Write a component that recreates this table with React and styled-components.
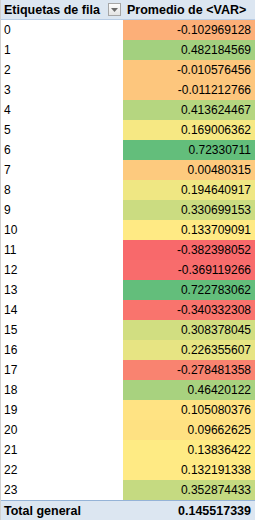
import React from 'react';
import styled, { createGlobalStyle } from 'styled-components';

const GlobalStyle = createGlobalStyle`
  body {
    margin: 0;
    background: #fff;
    font-family: "Liberation Sans", Arial, sans-serif;
  }
`

const Table = styled.div`
  width: 255px;
  border-left: 1px solid #d0d0d0;
  box-sizing: border-box;
  font-size: 12px;
  color: #000;
`

const Row = styled.div`
  display: grid;
  grid-template-columns: 122px 1fr;
  height: 20px;
  align-items: center;
`

const HeaderRow = styled(Row)`
  background: #dce6f1;
  height: 19px;
  border-bottom: 1px solid #b8cce4;
  font-weight: 700;
  font-size: 12.5px;
`

const TotalRow = styled(Row)`
  background: #dce6f1;
  height: 19px;
  border-top: 1px solid #95b3d7;
  font-weight: 700;
  font-size: 12.5px;
`

const LabelCell = styled.div`
  display: flex;
  align-items: center;
  justify-content: space-between;
  padding-left: 3px;
  padding-right: 2px;
  height: 100%;
  white-space: nowrap;
`

const ValueCell = styled.div`
  height: 100%;
  display: flex;
  align-items: center;
  justify-content: ${p => (p.$left ? 'flex-start' : 'flex-end')};
  padding: 0 4px;
  background: ${p => p.$bg || 'transparent'};
  white-space: nowrap;
`

const FilterButton = styled.div`
  width: 13px;
  height: 13px;
  flex-shrink: 0;
  box-sizing: border-box;
  border: 1px solid #a6a6a6;
  background: linear-gradient(#fdfdfd, #e4e4e4);
  display: flex;
  align-items: center;
  justify-content: center;
`

const rows = [
  -0.102969128, 0.482184569, -0.010576456, -0.011212766, 0.413624467,
  0.169006362, 0.72330711, 0.00480315, 0.194640917, 0.330699153,
  0.133709091, -0.382398052, -0.369119266, 0.722783062, -0.340332308,
  0.308378045, 0.226355607, -0.278481358, 0.46420122, 0.105080376,
  0.09662625, 0.13836422, 0.132191338, 0.352874433,
];

const labels = [
  '-0.102969128', '0.482184569', '-0.010576456', '-0.011212766', '0.413624467',
  '0.169006362', '0.72330711', '0.00480315', '0.194640917', '0.330699153',
  '0.133709091', '-0.382398052', '-0.369119266', '0.722783062', '-0.340332308',
  '0.308378045', '0.226355607', '-0.278481358', '0.46420122', '0.105080376',
  '0.09662625', '0.13836422', '0.132191338', '0.352874433',
];

const RED = [248, 105, 107];
const YELLOW = [255, 235, 132];
const GREEN = [99, 190, 123];

const sorted = [...rows].sort((a, b) => a - b);
const min = sorted[0];
const max = sorted[sorted.length - 1];
const mid = (sorted[11] + sorted[12]) / 2;

const mix = (a, b, t) =>
  `rgb(${a.map((c, i) => Math.round(c + (b[i] - c) * t)).join(',')})`;

const scale = v =>
  v <= mid ? mix(RED, YELLOW, (v - min) / (mid - min)) : mix(YELLOW, GREEN, (v - mid) / (max - mid));

const App = () => {
  return (
    <>
      <GlobalStyle />
      <Table>
        <HeaderRow>
          <LabelCell>
            Etiquetas de fila
            <FilterButton>
              <svg width="7" height="4" viewBox="0 0 7 4">
                <polygon points="0,0 7,0 3.5,4" fill="#6b6b6b" />
              </svg>
            </FilterButton>
          </LabelCell>
          <ValueCell $left>Promedio de &lt;VAR&gt;</ValueCell>
        </HeaderRow>
        {rows.map((v, i) => (
          <Row key={i}>
            <LabelCell>{i}</LabelCell>
            <ValueCell $bg={scale(v)}>{labels[i]}</ValueCell>
          </Row>
        ))}
        <TotalRow>
          <LabelCell>Total general</LabelCell>
          <ValueCell>0.145517339</ValueCell>
        </TotalRow>
      </Table>
    </>
  );
};

export default App;
